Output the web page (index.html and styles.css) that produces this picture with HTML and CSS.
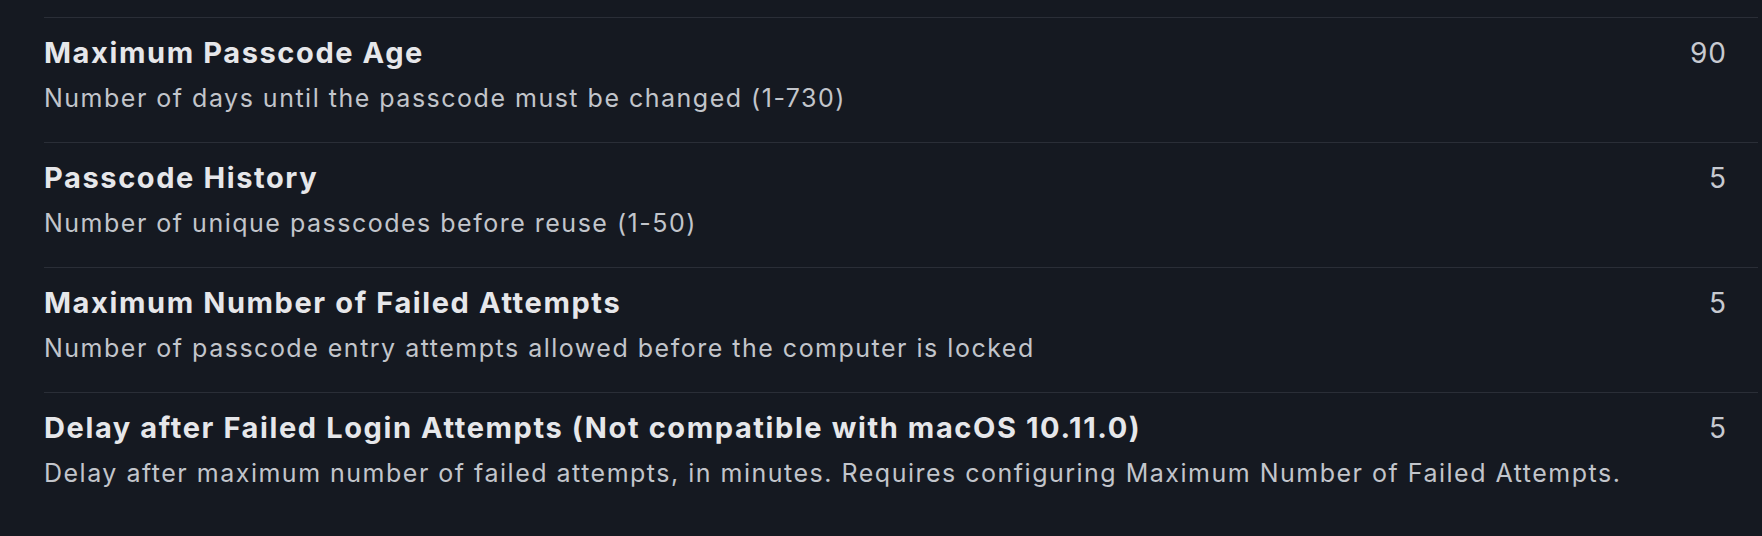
FILE: index.html
```html
<!DOCTYPE html>
<html lang="en">
<head>
<meta charset="utf-8">
<title>Passcode settings</title>
<link rel="stylesheet" href="styles.css">
</head>
<body>
<div class="settings">
  <div class="row">
    <div class="info">
      <div class="title">Maximum Passcode Age</div>
      <div class="desc">Number of days until the passcode must be changed (1-730)</div>
    </div>
    <div class="value">90</div>
  </div>
  <div class="row">
    <div class="info">
      <div class="title">Passcode History</div>
      <div class="desc">Number of unique passcodes before reuse (1-50)</div>
    </div>
    <div class="value">5</div>
  </div>
  <div class="row">
    <div class="info">
      <div class="title">Maximum Number of Failed Attempts</div>
      <div class="desc">Number of passcode entry attempts allowed before the computer is locked</div>
    </div>
    <div class="value">5</div>
  </div>
  <div class="row">
    <div class="info">
      <div class="title">Delay after Failed Login Attempts (Not compatible with macOS 10.11.0)</div>
      <div class="desc">Delay after maximum number of failed attempts, in minutes. Requires configuring Maximum Number of Failed Attempts.</div>
    </div>
    <div class="value">5</div>
  </div>
</div>
</body>
</html>
```
FILE: styles.css
```css
html, body {
  margin: 0;
  padding: 0;
  background: #151921;
  height: 100%;
}
body {
  font-family: Inter, "Noto Sans", sans-serif;
  overflow: hidden;
}
.settings {
  padding: 17px 4px 0 44px;
}
.row {
  display: flex;
  justify-content: space-between;
  align-items: flex-start;
  border-top: 1px solid #2a2e37;
  padding: 17px 31px 28px 0;
}
.info {
  display: flex;
  flex-direction: column;
  gap: 11px;
}
.title {
  font-size: 29px;
  line-height: 36px;
  font-weight: 700;
  letter-spacing: 1.6px;
  color: #e6e7ea;
}
.desc {
  font-size: 25px;
  line-height: 32px;
  letter-spacing: 1.5px;
  color: #c2c5cb;
}
.value {
  font-size: 28px;
  line-height: 36px;
  letter-spacing: 1px;
  color: #c7cad0;
}
```
